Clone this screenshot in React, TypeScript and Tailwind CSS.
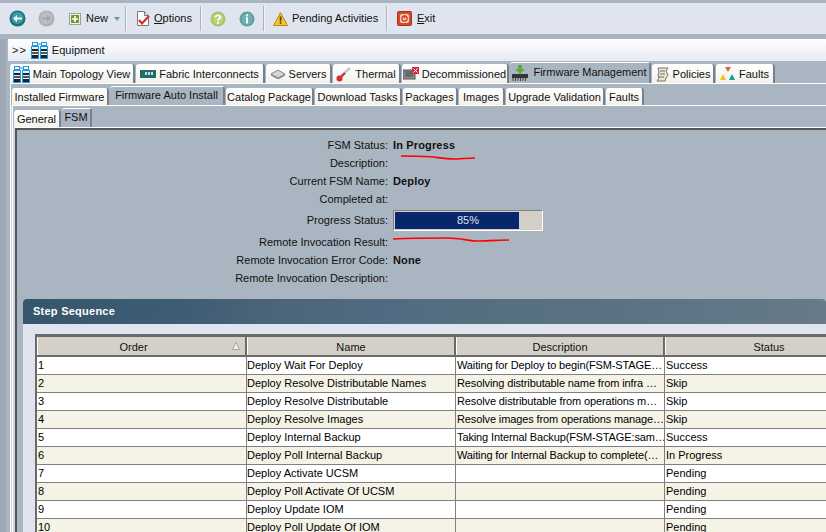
import type { ReactNode } from 'react';

// ---- icons
function BackIcon({ off }: { off?: boolean }) {
  return (
    <svg width="17" height="17" viewBox="0 0 17 17" className="shrink-0">
      <circle cx="8.5" cy="8.5" r="8" fill={off ? '#aeb0b4' : '#1f6f78'} />
      <circle cx="8.5" cy="8" r="6" fill={off ? '#bcbec2' : '#3f9ea3'} />
      {off ? (
        <path d="M4 7.5h5V5l4 3.5-4 3.5V9.5H4z" fill="#a3a5a9" />
      ) : (
        <path d="M13 7.5H8V5L4 8.5 8 12V9.5h5z" fill="#f2f7f7" />
      )}
    </svg>
  );
}

function EquipIcon() {
  const rack = (x: number) => (
    <g key={x}>
      <rect x={x + 1.5} y="0.5" width="5" height="3" fill="none" stroke="#1b9ae0" />
      <rect x={x + 0.5} y="4.5" width="7" height="12" fill="#dff2fc" stroke="#1b9ae0" />
      <rect x={x + 1} y="7" width="6" height="2" fill="#222" />
      <rect x={x + 1} y="10" width="6" height="2" fill="#555" />
      <rect x={x + 1} y="13" width="6" height="3" fill="#222" />
    </g>
  );
  return (
    <svg width="17" height="17" viewBox="0 0 17 17" className="shrink-0">
      {rack(0)}
      {rack(9)}
      <path d="M6 2h5" stroke="#1b9ae0" />
    </svg>
  );
}

function Sep({ className }: { className: string }) {
  return <div className={`w-[2px] h-[25px] shrink-0 bg-[#aab3c0] border-r border-[#f2f4f8] ${className}`} />;
}

function ToolLabel({ ul, rest, className }: { ul?: string; rest: string; className: string }) {
  return (
    <span className={`whitespace-nowrap ${className}`}>
      {ul ? <span className="underline">{ul}</span> : null}
      {rest}
    </span>
  );
}

function Toolbar() {
  return (
    <div className="h-[31px] mt-[3px] shrink-0 bg-[#dfe4ef] flex items-center text-[#111] pl-[9px]">
      <BackIcon />
      <div className="w-[12px] shrink-0" />
      <BackIcon off />
      <svg width="12" height="12" viewBox="0 0 12 12" className="ml-[14px] shrink-0">
        <rect x="0.5" y="0.5" width="11" height="11" fill="#f4f6e8" stroke="#9aa58a" />
        <rect x="2" y="2" width="8" height="8" fill="#6f9a35" />
        <path d="M6 3v6M3 6h6" stroke="#fff" strokeWidth="1.6" />
      </svg>
      <ToolLabel rest="New" className="ml-[5px] w-[28px]" />
      <svg width="6" height="4" viewBox="0 0 6 4" className="shrink-0">
        <path d="M0 0h6L3 4z" fill="#6d95b5" />
      </svg>
      <Sep className="ml-[5px]" />
      <svg width="14" height="17" viewBox="0 0 14 17" className="ml-[9px] shrink-0">
        <path d="M1.5 1.5h7l4 4v10h-11z" fill="#fff" stroke="#77777f" />
        <path d="M8.5 1.5v4h4" fill="#ddd" stroke="#77777f" />
        <path d="M3 10l3 3.5L13 6" fill="none" stroke="#d8232a" strokeWidth="2" />
      </svg>
      <ToolLabel ul="O" rest="ptions" className="ml-[4px] w-[46px]" />
      <Sep className="ml-0" />
      <svg width="16" height="16" viewBox="0 0 16 16" className="ml-[8px] shrink-0">
        <circle cx="8" cy="8" r="7.5" fill="#a6c46a" />
        <circle cx="8" cy="8" r="5.5" fill="#b8d27e" />
        <path d="M5.6 6.2C5.8 3.8 10.4 3.8 10.4 6.2 10.4 7.8 8 7.8 8 9.6" fill="none" stroke="#fff" strokeWidth="1.8" />
        <rect x="7" y="10.8" width="2" height="2" fill="#fff" />
      </svg>
      <svg width="16" height="16" viewBox="0 0 16 16" className="ml-[13px] shrink-0">
        <circle cx="8" cy="8" r="7.5" fill="#5c9fa3" />
        <circle cx="8" cy="8" r="5.5" fill="#6fb0b3" />
        <rect x="7" y="3.4" width="2" height="2" fill="#fff" />
        <rect x="7" y="6.4" width="2" height="6" fill="#fff" />
      </svg>
      <Sep className="ml-[8px]" />
      <svg width="15" height="14" viewBox="0 0 15 14" className="ml-[8px] shrink-0">
        <path d="M7.5 0.7L14.5 13.5H0.5z" fill="#f7c628" stroke="#b08a1a" />
        <rect x="6.7" y="4.4" width="1.7" height="5" fill="#5a3d10" />
        <rect x="6.7" y="10.2" width="1.7" height="1.7" fill="#5a3d10" />
      </svg>
      <ToolLabel rest="Pending Activities" className="ml-[4px] w-[94px]" />
      <Sep className="ml-0" />
      <svg width="15" height="15" viewBox="0 0 15 15" className="ml-[9px] shrink-0">
        <rect x="0.5" y="0.5" width="14" height="14" rx="1" fill="#d8472a" stroke="#a5331c" />
        <rect x="3" y="3" width="9" height="9" rx="2" fill="#f6d3c4" />
        <circle cx="7.5" cy="7.5" r="2.6" fill="none" stroke="#d8472a" strokeWidth="1.5" />
        <path d="M7.5 4v3.5" stroke="#d8472a" strokeWidth="1.5" />
      </svg>
      <ToolLabel ul="E" rest="xit" className="ml-[5px]" />
    </div>
  );
}

function Tab({ children, active, className }: { children: ReactNode; active?: boolean; className: string }) {
  return (
    <div
      className={`flex items-center justify-center gap-[3px] shrink-0 whitespace-nowrap rounded-t-[3px] border-r-2 border-r-[#76818d] ${
        active ? 'bg-[#aab5c2] border-t border-t-white pb-px' : 'bg-gradient-to-b from-white to-[#f3f1ec] pt-px'
      } ${className}`}
    >
      {children}
    </div>
  );
}

const rows = [
  ['1', 'Deploy Wait For Deploy', 'Waiting for Deploy to begin(FSM-STAGE…', 'Success'],
  ['2', 'Deploy Resolve Distributable Names', 'Resolving distributable name from infra …', 'Skip'],
  ['3', 'Deploy Resolve Distributable', 'Resolve distributable from operations m…', 'Skip'],
  ['4', 'Deploy Resolve Images', 'Resolve images from operations manage…', 'Skip'],
  ['5', 'Deploy Internal Backup', 'Taking Internal Backup(FSM-STAGE:sam…', 'Success'],
  ['6', 'Deploy Poll Internal Backup', 'Waiting for Internal Backup to complete(…', 'In Progress'],
  ['7', 'Deploy Activate UCSM', '', 'Pending'],
  ['8', 'Deploy Poll Activate Of UCSM', '', 'Pending'],
  ['9', 'Deploy Update IOM', '', 'Pending'],
  ['10', 'Deploy Poll Update Of IOM', '', 'Pending'],
];

function Field({ label, value, className }: { label: string; value?: string; className: string }) {
  return (
    <div className={`flex items-center ${className}`}>
      <div className="w-[371px] text-right shrink-0">{label}</div>
      <div className="font-bold ml-[5px] tracking-[0.15px]">{value}</div>
    </div>
  );
}

function Grid() {
  const cols = 'grid grid-cols-[210px_209px_209px_209px] w-[837px]';
  return (
    <div className="ml-[12px] border-l-2 border-t-[3px] border-[#6a6a6a] bg-white">
      <div className={`${cols} h-[20px] bg-[#d4d0c8] border-b-2 border-[#6a6a6a]`}>
        {['Order', 'Name', 'Description', 'Status'].map((c) => (
          <div
            key={c}
            className={`relative flex items-center justify-center pt-[2px] border-l border-white border-r-2 border-r-[#6a6a6a] ${c === 'Order' ? 'pr-[16px]' : ''}`}
          >
            {c}
            {c === 'Order' && (
              <svg width="8" height="8" viewBox="0 0 8 8" className="absolute right-[5px] top-[5px]">
                <path d="M4 0.5L7.5 7.5H0.5z" fill="#eeeeee" stroke="#8f8f8f" strokeWidth="0.7" />
              </svg>
            )}
          </div>
        ))}
      </div>
      {rows.map((r, i) => (
        <div key={r[0]} className={`${cols} h-[18px] border-b border-[#808080] ${i % 2 ? 'bg-[#f5f2e6]' : 'bg-white'}`}>
          {r.map((c, j) => (
            <div
              key={j}
              className={`flex items-center pb-px whitespace-nowrap overflow-hidden border-r border-[#808080] text-black ${
                j === 1 ? 'pl-0' : j === 2 ? 'pl-px tracking-[-0.12px]' : 'pl-px'
              }`}
            >
              {c}
            </div>
          ))}
        </div>
      ))}
    </div>
  );
}

export default function App() {
  return (
    <div className="relative font-['Liberation_Sans',Arial,sans-serif] w-[826px] h-[532px] overflow-hidden bg-[#aab5c2] text-[11px] leading-[13px] text-[#111] flex flex-col">
      <Toolbar />
      <div className="h-[5px] shrink-0" />
      <div className="flex-1 flex min-h-0">
        <div className="w-[8px] shrink-0 bg-[#9ea9b6] border-r-2 border-[#aab5c2]" />
        <div className="flex-1 min-w-0 flex flex-col overflow-hidden">
          <div className="h-[22px] shrink-0 bg-gradient-to-b from-white to-[#e6ebf3] flex items-center pl-[4px] gap-[4px]">
            <span className="tracking-[1px]">&gt;&gt;</span>
            <EquipIcon />
            <span>Equipment</span>
          </div>
          <div className="h-[22px] shrink-0 flex items-end gap-px pl-[2px] pt-px">
            <Tab className="w-[125px] h-[19px]"><EquipIcon /><span>Main Topology View</span></Tab>
            <Tab className="w-[129px] h-[19px]">
              <svg width="16" height="8" viewBox="0 0 16 8"><rect width="16" height="8" fill="#1d6f66" /><rect x="5" y="2" width="2" height="3" fill="#cde" /><rect x="8" y="2" width="2" height="3" fill="#cde" /><rect x="11" y="2" width="2" height="3" fill="#cde" /></svg>
              <span>Fabric Interconnects</span>
            </Tab>
            <Tab className="w-[66px] h-[19px]">
              <svg width="16" height="10" viewBox="0 0 16 10"><path d="M1 5l7-4 7 4-7 4z" fill="#d5d5d5" stroke="#888" /><path d="M1 6l7 4 7-4" fill="none" stroke="#777" /></svg>
              <span>Servers</span>
            </Tab>
            <Tab className="w-[68px] h-[19px]">
              <svg width="16" height="16" viewBox="0 0 16 16"><path d="M14 2L5 10" stroke="#c9c9c9" strokeWidth="2.5" /><path d="M9 7L5 11" stroke="#cc2a2a" strokeWidth="2" /><circle cx="3.5" cy="12.5" r="3" fill="#d92c2c" /></svg>
              <span>Thermal</span>
            </Tab>
            <Tab className="w-[107px] h-[19px]">
              <svg width="16" height="14" viewBox="0 0 16 14"><rect x="0" y="3" width="12" height="9" fill="#8d8d90" stroke="#555" /><path d="M2 5h8M2 7h8M2 9h8" stroke="#444" /><rect x="9" y="0" width="7" height="7" fill="#d62a3a" /><path d="M10.5 1.5l4 4m0-4l-4 4" stroke="#fff" /></svg>
              <span>Decommissioned</span>
            </Tab>
            <Tab active className="w-[141px] h-[21px]">
              <svg width="16" height="16" viewBox="0 0 16 16"><path d="M6 0h4v4h3l-5 5-5-5h3z" fill="#66a83c" /><rect x="0" y="9" width="16" height="4" fill="#333" /><path d="M1 13v3M3.5 13v3M6 13v3M8.5 13v3M11 13v3M13.5 13v3" stroke="#444" /></svg>
              <span className="ml-[2px]">Firmware Management</span>
            </Tab>
            <Tab className="w-[63px] h-[19px]">
              <svg width="15" height="15" viewBox="0 0 15 15"><path d="M3 1h10L11 4l2 4-2 3-1 3H2l2-3-1-3 1-3z" fill="#ebe6d8" stroke="#7a6f5f" /><path d="M5 4h5M5 7h5M4 10h5" stroke="#7a6f5f" /></svg>
              <span>Policies</span>
            </Tab>
            <Tab className="w-[59px] h-[19px]">
              <svg width="16" height="14" viewBox="0 0 16 14"><path d="M5 0h6L8 5z" fill="#e8622a" /><path d="M0 13l3-6 3 6z" fill="#f4c21f" /><path d="M9 13l3-6 3 6z" fill="#1a9a98" /></svg>
              <span>Faults</span>
            </Tab>
          </div>
          {/* nested tab panels, each a white edge inside the last */}
          <div className="flex-1 min-h-0 flex flex-col ml-[2px] border-l border-t border-white bg-[#cfd6e0]">
            <div className="h-[21px] shrink-0 flex items-end gap-px pl-px bg-[#aab5c2]">
              <Tab className="w-[97px] h-[17px]">Installed Firmware</Tab>
              <Tab active className="w-[115px] h-[19px]">Firmware Auto Install</Tab>
              <Tab className="w-[88px] h-[17px]">Catalog Package</Tab>
              <Tab className="w-[87px] h-[17px]">Download Tasks</Tab>
              <Tab className="w-[55px] h-[17px]">Packages</Tab>
              <Tab className="w-[46px] h-[17px]">Images</Tab>
              <Tab className="w-[99px] h-[17px]">Upgrade Validation</Tab>
              <Tab className="w-[38px] h-[17px]">Faults</Tab>
            </div>
            <div className="flex-1 min-h-0 flex flex-col ml-px border-l border-t border-white bg-[#cfd6e0]">
              <div className="h-[21px] shrink-0 flex items-end gap-px pl-px bg-[#aab5c2]">
                <Tab className="w-[47px] h-[17px]">General</Tab>
                <Tab active className="w-[30px] h-[19px]">FSM</Tab>
              </div>
              <div className="flex-1 min-h-0 ml-[2px] border-t border-white bg-[#aab5c2]">
                <div className="h-full border-l-2 border-t-2 border-[#555]">
                  <div className="pt-[6px]">
                    <Field label="FSM Status:" value="In Progress" className="h-[18px]" />
                    <Field label="Description:" className="h-[18px]" />
                    <Field label="Current FSM Name:" value="Deploy" className="h-[18px]" />
                    <Field label="Completed at:" className="h-[18px]" />
                    <div className="flex items-center h-[24px]">
                      <div className="w-[371px] text-right shrink-0">Progress Status:</div>
                      <div className="ml-[5px] w-[150px] h-[21px] border border-[#808080] border-r-white border-b-white bg-[#d4d0c8] p-px">
                        <div className="relative h-full">
                          <div className="absolute inset-y-0 left-0 w-[124px] bg-[#08266b]" />
                          <div className="absolute inset-0 flex items-center justify-center text-[#dfe4ef]">85%</div>
                        </div>
                      </div>
                    </div>
                    <Field label="Remote Invocation Result:" className="h-[20px]" />
                    <Field label="Remote Invocation Error Code:" value="None" className="h-[16px]" />
                    <Field label="Remote Invocation Description:" className="h-[20px]" />
                  </div>
                  <div className="ml-[6px] mt-[11px] rounded-t-[4px] overflow-hidden bg-[#dfe4ef] h-[240px]">
                    <div className="h-[25px] bg-[linear-gradient(100deg,#36566b_0%,#3f5c74_20%,#4c6578_32%,#506a82_45%,#56707f_60%,#5c7284_75%,#667a88_100%)] flex items-center pl-[10px] text-white font-bold tracking-[0.25px]">
                      Step Sequence
                    </div>
                    <div className="h-[10px]" />
                    <Grid />
                  </div>
                </div>
              </div>
            </div>
          </div>
        </div>
      </div>
      {/* red pen marks scribbled on the screenshot */}
      <svg width="826" height="532" viewBox="0 0 826 532" className="absolute left-0 top-0 pointer-events-none">
        <path d="M401 156c12 0 24 0 32 1s14 2 20 2 16-1 22-1" fill="none" stroke="#f00" strokeWidth="1.7" />
        <path d="M393 239c20-1 40-1 54-1s22 3 30 3 20-1 32-1" fill="none" stroke="#f00" strokeWidth="1.7" />
      </svg>
    </div>
  );
}
